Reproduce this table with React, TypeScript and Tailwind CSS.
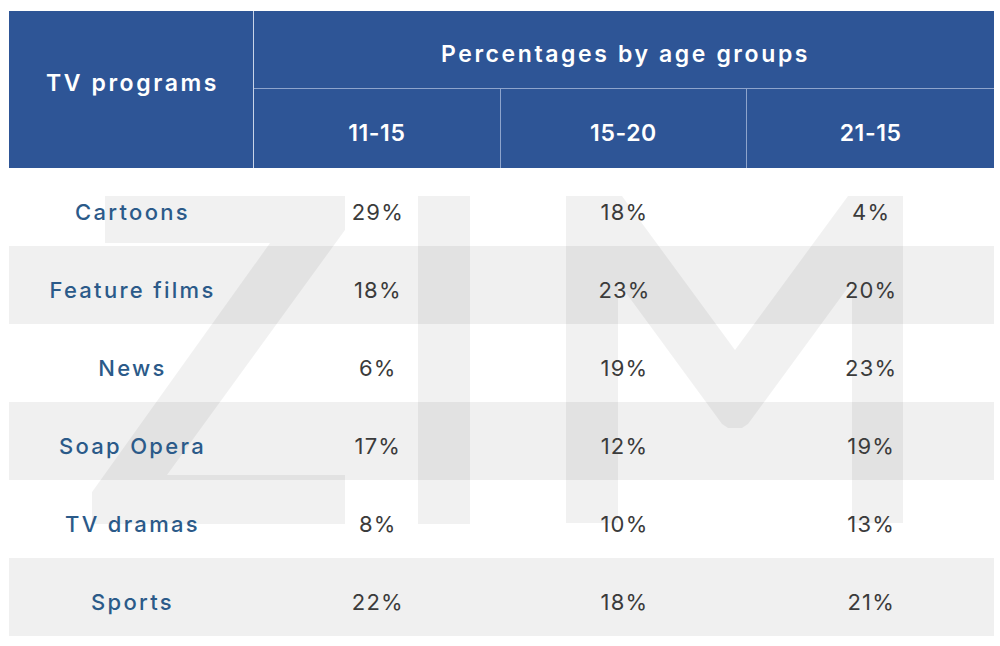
import React from 'react';

type Row = { name: string; values: string[] };

const rows: Row[] = [
  { name: 'Cartoons', values: ['29%', '18%', '4%'] },
  { name: 'Feature films', values: ['18%', '23%', '20%'] },
  { name: 'News', values: ['6%', '19%', '23%'] },
  { name: 'Soap Opera', values: ['17%', '12%', '19%'] },
  { name: 'TV dramas', values: ['8%', '10%', '13%'] },
  { name: 'Sports', values: ['22%', '18%', '21%'] },
];

const ages = ['11-15', '15-20', '21-15'];

// big faded "ZIM" behind the rows, coords relative to the body block (x-9, y-168)
const Watermark = () => (
  <svg
    className="absolute left-0 top-0 pointer-events-none"
    width="985"
    height="467"
    viewBox="9 168 985 467"
  >
    <g fill="#000" fillOpacity="0.055">
      <polygon points="105,196 345,196 345,230 167,475 345,475 345,524 92,524 92,492 270,243 105,243" />
      <rect x="418" y="196" width="52" height="328" />
      <polygon points="566,196 622,196 735,350 848,196 903,196 903,523 852,523 852,282 748,424 742,428 728,428 722,424 618,282 618,523 566,523" />
    </g>
  </svg>
);

export default function App() {
  return (
    <div className="w-[1000px] h-[646px] bg-white pt-[11px] pl-[9px] font-['Inter','Open_Sans',sans-serif]">
      <div className="w-[985px]">
        <div className="grid grid-cols-[245px_1fr_1fr_1fr] grid-rows-[78px_79px] bg-[#2e5596] text-white font-semibold">
          <div className="row-span-2 border-r border-[#c9d4e8] flex items-center justify-center text-[23px] pb-[12px] pl-[3px] tracking-[2.6px]">
            TV programs
          </div>
          <div className="col-span-3 border-b border-[#8ea4cc] flex items-center justify-center text-[23px] pt-[10px] pl-[3px] tracking-[2.6px]">
            Percentages by age groups
          </div>
          {ages.map((a, i) => (
            <div
              key={a}
              className={`flex items-center justify-center text-[23px] pt-[10px] tracking-[0.6px] ${i < 2 ? 'border-r border-[#8ea4cc]' : ''}`}
            >
              {a}
            </div>
          ))}
        </div>

        <div className="relative">
          <Watermark />
          {rows.map((r, i) => (
            <div
              key={r.name}
              className={`grid grid-cols-[245px_1fr_1fr_1fr] h-[78px] ${i % 2 === 1 ? 'bg-[#f0f0f0]' : ''}`}
            >
              <div className="relative z-10 flex items-center justify-center pt-[10px] pl-[2px] text-[22px] font-medium text-[#2b5a89] tracking-[2.3px]">
                {r.name}
              </div>
              {r.values.map((v, j) => (
                <div
                  key={j}
                  className="relative z-10 flex items-center justify-center pt-[10px] pl-[1px] text-[22px] text-[#3b3b3b] tracking-[1.2px]"
                >
                  {v}
                </div>
              ))}
            </div>
          ))}
        </div>
      </div>
    </div>
  );
}
